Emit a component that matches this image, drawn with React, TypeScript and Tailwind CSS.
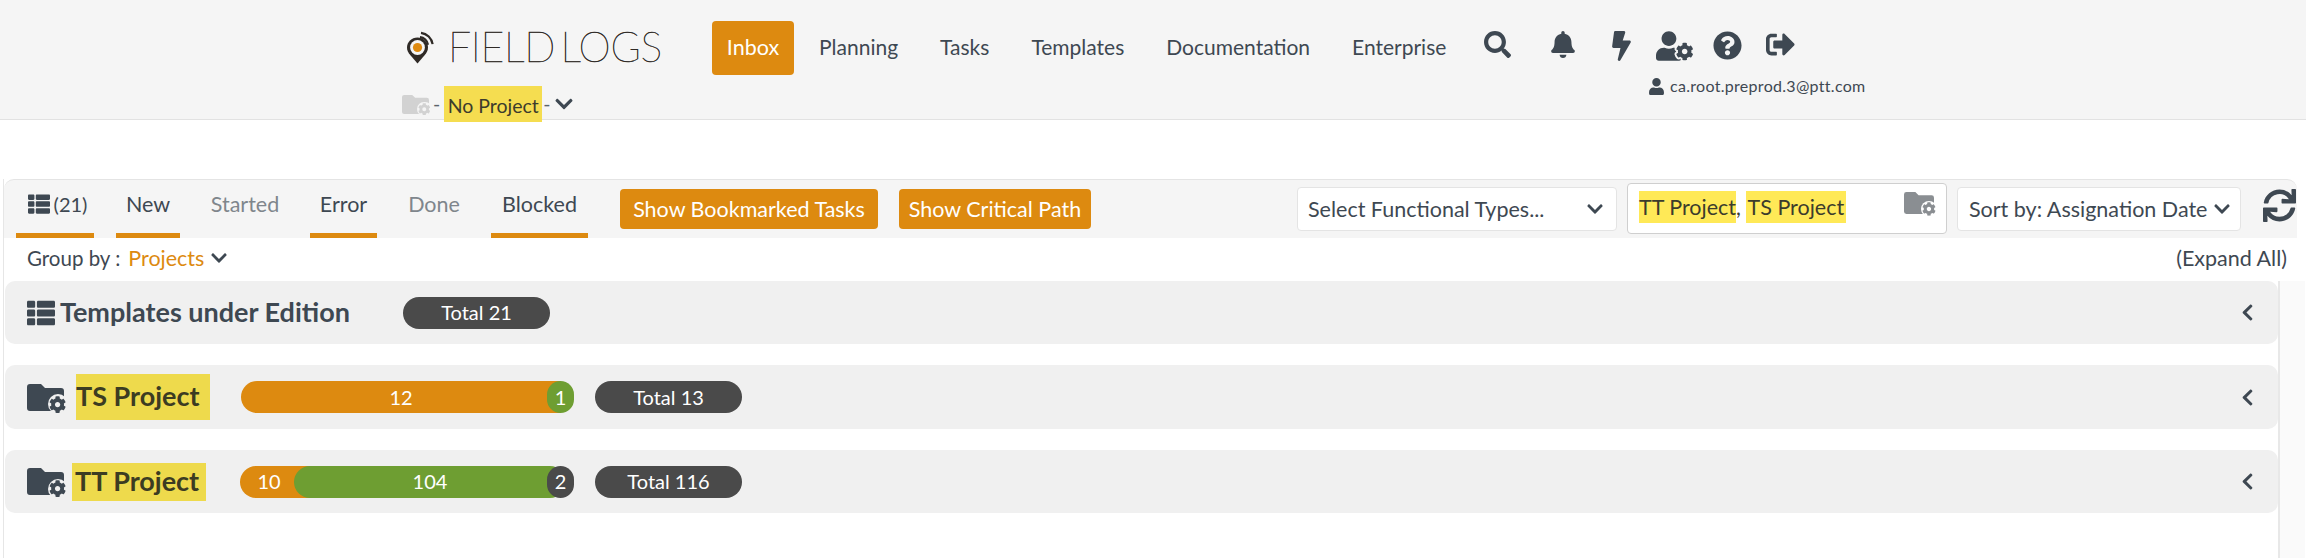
import React from "react";
import {
  FaSearch, FaBell, FaBolt, FaUserCog, FaQuestionCircle, FaSignOutAlt, FaUser,
  FaChevronDown, FaChevronLeft, FaThList, FaSync, FaCog,
} from "react-icons/fa";

function FolderGear({ w, h, color, ring, gear }: { w: string; h: string; color: string; ring: string; gear: string }) {
  return (
    <span className={`relative inline-block shrink-0 ${w} ${h}`}>
      <svg viewBox="0 0 37 27" preserveAspectRatio="none" className={`w-full h-full ${color}`}>
        <path fill="currentColor" d="M3 0h11l4 4h16a3 3 0 0 1 3 3v17a3 3 0 0 1-3 3H3a3 3 0 0 1-3-3V3a3 3 0 0 1 3-3z" />
      </svg>
      <span className={`absolute right-[-10%] bottom-[-14%] w-[54%] aspect-square rounded-full flex items-center justify-center ${ring}`}>
        <FaCog className={`w-[86%] h-[86%] ${gear}`} />
      </span>
    </span>
  );
}

function Logo() {
  return (
    <svg viewBox="0 0 28 33" className="w-[28px] h-[33px] shrink-0">
      <path d="M11.5 6.5C5.5 6.5 1 11 1 16.5c0 3.2 1.4 5.3 3 7.2L11.5 32.5 19 23.7c1.6-1.9 3-4 3-7.2C22 11 17.5 6.5 11.5 6.5z" fill="#2f2a26" />
      <circle cx="11.5" cy="16.5" r="7.4" fill="#f5f5f5" />
      <circle cx="11.5" cy="16.5" r="4.6" fill="#de8a10" />
      <path d="M14 6.2a9 9 0 0 1 8 7.5M15 1.8a13.5 13.5 0 0 1 11.6 11.4" fill="none" stroke="#2f2a26" strokeWidth="2.2" />
    </svg>
  );
}

function Tab({ label, active, wide, icon }: { label: string; active?: boolean; wide: string; icon?: boolean }) {
  return (
    <div className={`h-full flex items-center justify-center gap-[4px] pb-[5px] border-b-[5px] ${wide} ${active ? "border-[#dd8a10] text-[#3e4852]" : "border-transparent text-[#7f868c]"}`}>
      {icon && <FaThList className="w-[22px] h-[22px] text-[#3e4852]" />}
      <span>{label}</span>
    </div>
  );
}

function Row({ children, className }: { children: React.ReactNode; className: string }) {
  return (
    <div className={`rounded-[10px] bg-[#f0f0f0] flex items-center pl-[22px] pr-[24px] ${className}`}>
      {children}
      <FaChevronLeft className="ml-auto w-[13px] h-[19px] text-[#3e4852]" />
    </div>
  );
}

function Pill({ label, w, ml }: { label: string; w: string; ml: string }) {
  return (
    <div className={`h-[32px] rounded-full bg-[#4a4a4a] text-white text-[20px] pb-[1px] flex items-center justify-center ${w} ${ml}`}>
      {label}
    </div>
  );
}

export default function App() {
  return (
    <div className="w-[2306px] h-[558px] overflow-hidden bg-white text-[#3e4852] font-['Lato','Liberation_Sans',sans-serif] text-[21.5px]">
      <header className="h-[120px] bg-[#f5f5f5] border-b border-[#e2e2e2] pl-[402px] flex">
        <div className="w-[310px] shrink-0">
          <div className="h-[86px] flex items-start pt-[31px] pl-[4px]">
            <Logo />
            <span className="ml-[14px] -mt-[7px] text-[41px] leading-[46px] font-thin text-[#2f2a26] [-webkit-text-stroke:0.5px_#2f2a26] tracking-[-0.3px] [word-spacing:-6px] whitespace-nowrap">FIELD LOGS</span>
          </div>
          <div className="flex items-center h-[36px] text-[19.5px]">
            <FolderGear w="w-[27px]" h="h-[19px]" color="text-[#d2d2d2]" ring="bg-[#f5f5f5]" gear="text-[#d2d2d2]" />
            <span className="ml-[4px] text-[#5a636b]">-</span>
            <span className="ml-[4px] w-[98px] h-[36px] pt-[3px] bg-[#f5dd50] text-[#3c3c2c] flex items-center justify-center whitespace-nowrap">No Project</span>
            <span className="ml-[1px] text-[#5a636b]">-</span>
            <FaChevronDown className="ml-[3px] w-[20px] h-[20px]" />
          </div>
        </div>
        <div className="flex flex-col">
          <nav className="flex items-start pt-[21px]">
            <div className="w-[82px] h-[54px] rounded-[4px] bg-[#dd8a10] text-white flex items-center justify-center pb-[2px]">Inbox</div>
            <div className="h-[54px] flex items-center ml-[25px] gap-[42px] text-[21px] whitespace-nowrap pb-[2px]">
              <span>Planning</span>
              <span>Tasks</span>
              <span>Templates</span>
              <span>Documentation</span>
              <span>Enterprise</span>
            </div>
            <div className="h-[54px] flex items-center ml-[38px] text-[#3e4852]">
              <FaSearch className="w-[27px] h-[27px] -mt-[8px]" />
              <FaBell className="ml-[40px] w-[24px] h-[27px] -mt-[7px]" />
              <FaBolt className="ml-[37px] w-[19px] h-[30px] -mt-[4px]" />
              <FaUserCog className="ml-[25px] w-[37px] h-[30px] -mt-[4px]" />
              <FaQuestionCircle className="ml-[20px] w-[29px] h-[29px] -mt-[5px]" />
              <FaSignOutAlt className="ml-[24px] w-[29px] h-[29px] -mt-[7px]" />
            </div>
          </nav>
          <div className="ml-[937px] mt-[-1px] flex items-center text-[16px] tracking-[0.3px] whitespace-nowrap">
            <FaUser className="w-[15px] h-[17px]" />
            <span className="ml-[6px]">ca.root.preprod.3@ptt.com</span>
          </div>
        </div>
      </header>

      <main className="mt-[59px] ml-[3px] border-l border-[#e6e6e6] h-[379px]">
        <div className="h-[59px] mr-[9px] bg-[#f5f5f5] border-t border-[#e4e4e4] rounded-t-[10px] flex items-stretch">
          <div className="flex items-stretch h-full whitespace-nowrap">
            <Tab label="(21)" active icon wide="w-[78px] ml-[12px] pl-[5px] text-[20px]" />
            <Tab label="New" active wide="w-[64px] ml-[22px]" />
            <Tab label="Started" wide="w-[86px] ml-[22px]" />
            <Tab label="Error" active wide="w-[67px] ml-[22px]" />
            <Tab label="Done" wide="w-[70px] ml-[22px]" />
            <Tab label="Blocked" active wide="w-[97px] ml-[22px]" />
          </div>
          <div className="flex items-start pt-[9px] gap-[21px] ml-[32px] text-white whitespace-nowrap">
            <div className="w-[258px] h-[40px] rounded-[4px] bg-[#dd8a10] flex items-center justify-center">Show Bookmarked Tasks</div>
            <div className="w-[192px] h-[40px] rounded-[4px] bg-[#dd8a10] flex items-center justify-center">Show Critical Path</div>
          </div>
          <div className="flex items-start pt-[7px] ml-[206px] whitespace-nowrap">
            <div className="w-[320px] h-[44px] bg-white border border-[#e4e4e4] rounded-[4px] flex items-center pl-[10px] pr-[12px]">
              <span>Select Functional Types...</span>
              <FaChevronDown className="ml-auto w-[18px] h-[18px]" />
            </div>
            <div className="ml-[10px] -mt-[4px] w-[320px] h-[51px] bg-white border border-[#cfcfcf] rounded-[4px] flex items-center pl-[11px] pr-[12px] pb-[4px] text-[#3c3c2c]">
              <span className="h-[32px] w-[97px] pt-[2px] bg-[#ffe957] flex items-center justify-center">TT Project</span>
              <span className="pt-[2px]">,</span>
              <span className="ml-[5px] h-[32px] w-[100px] pt-[2px] bg-[#ffe957] flex items-center justify-center">TS Project</span>
              <span className="ml-auto">
                <FolderGear w="w-[30px]" h="h-[22px]" color="text-[#8a8e92]" ring="bg-white" gear="text-[#8a8e92]" />
              </span>
            </div>
            <div className="ml-[10px] w-[284px] h-[44px] bg-white border border-[#e4e4e4] rounded-[4px] flex items-center pl-[11px] pr-[9px]">
              <span>Sort by: Assignation Date</span>
              <FaChevronDown className="ml-auto w-[18px] h-[18px]" />
            </div>
            <FaSync className="ml-[22px] mt-[2px] w-[33px] h-[33px]" />
          </div>
        </div>

        <div className="h-[43px] flex items-center pl-[23px] pr-[19px] pb-[2px] whitespace-nowrap">
          <span className="text-[20.5px]">Group by :</span>
          <span className="ml-[8px] text-[#dd8a10]">Projects</span>
          <FaChevronDown className="ml-[6px] w-[18px] h-[18px] -mt-[2px]" />
          <span className="ml-auto">(Expand All)</span>
        </div>

        <div className="flex">
          <div className="w-[2273px] ml-[1px] pb-[45px]">
            <Row className="h-[63px]">
              <FaThList className="w-[28px] h-[28px] shrink-0" />
              <span className="ml-[5px] w-[343px] text-[27px] font-bold whitespace-nowrap">Templates under Edition</span>
              <Pill label="Total 21" w="w-[147px]" ml="ml-0" />
            </Row>
            <Row className="h-[64px] mt-[21px]">
              <FolderGear w="w-[37px]" h="h-[27px]" color="text-[#3e4852]" ring="bg-[#f0f0f0]" gear="text-[#3e4852]" />
              <span className="ml-[12px] w-[134px] h-[46px] pb-[2px] bg-[#eeda4c] text-[#3c3c22] text-[27px] font-bold flex items-center justify-start whitespace-nowrap">TS Project</span>
              <div className="ml-[31px] w-[333px] h-[32px] flex text-white text-[20px]">
                <div className="w-[320px] rounded-l-full bg-[#dd8a10] pb-[1px] flex items-center justify-center shrink-0">12</div>
                <div className="w-[27px] -ml-[14px] rounded-full bg-[#6e9e32] pb-[1px] flex items-center justify-center shrink-0">1</div>
              </div>
              <Pill label="Total 13" w="w-[147px]" ml="ml-[21px]" />
            </Row>
            <Row className="h-[63px] mt-[21px]">
              <FolderGear w="w-[37px]" h="h-[27px]" color="text-[#3e4852]" ring="bg-[#f0f0f0]" gear="text-[#3e4852]" />
              <span className="ml-[8px] w-[134px] h-[38px] pl-[3px] bg-[#eeda4c] text-[#3c3c22] text-[27px] font-bold flex items-center justify-start whitespace-nowrap">TT Project</span>
              <div className="ml-[34px] w-[334px] h-[32px] flex text-white text-[20px]">
                <div className="w-[72px] rounded-l-full bg-[#dd8a10] pr-[14px] pb-[1px] flex items-center justify-center shrink-0">10</div>
                <div className="w-[272px] -ml-[18px] rounded-full bg-[#6e9e32] pb-[1px] flex items-center justify-center shrink-0">104</div>
                <div className="w-[27px] -ml-[19px] rounded-full bg-[#4a4a4a] pb-[1px] flex items-center justify-center shrink-0">2</div>
              </div>
              <Pill label="Total 116" w="w-[147px]" ml="ml-[21px]" />
            </Row>
          </div>
          <div className="w-[27px] h-[277px] border-l-[2px] border-[#e8e8e8] bg-[#fafafa]" />
        </div>
      </main>
    </div>
  );
}
